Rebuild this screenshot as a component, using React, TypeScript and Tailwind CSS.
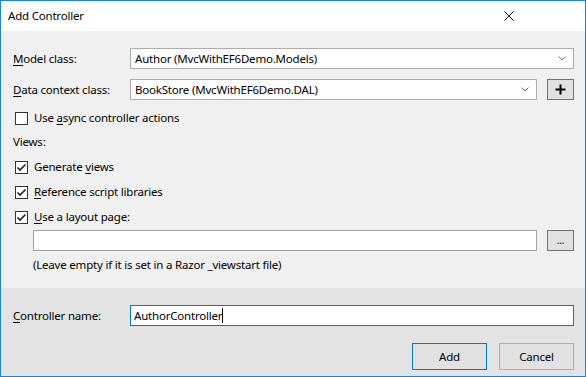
import React from "react";

const font = { fontFamily: '"Noto Sans", "Segoe UI", sans-serif' };

function Chevron() {
  return (
    <svg width="8" height="5" viewBox="0 0 8 5" className="shrink-0">
      <path d="M0.5 0.5 L4 4 L7.5 0.5" fill="none" stroke="#7a7a7a" strokeWidth="1" />
    </svg>
  );
}

function Combo({ value, className = "" }: { value: string; className?: string }) {
  return (
    <div
      className={`flex h-[21px] items-center justify-between border border-[#acacac] bg-white pl-[4px] pr-[7px] ${className}`}
    >
      <span className="whitespace-nowrap">{value}</span>
      <Chevron />
    </div>
  );
}

function Check({ checked }: { checked?: boolean }) {
  return (
    <div className="flex h-[13px] w-[13px] shrink-0 items-center justify-center border border-[#333] bg-white">
      {checked && (
        <svg width="11" height="11" viewBox="0 0 11 11">
          <path d="M1.5 5.5 L4 8 L9.5 2.5" fill="none" stroke="#222" strokeWidth="1.6" />
        </svg>
      )}
    </div>
  );
}

function CheckRow({ checked, children }: { checked?: boolean; children: React.ReactNode }) {
  return (
    <div className="flex h-[16px] items-center gap-[6px] pl-[14px]">
      <Check checked={checked} />
      <span>{children}</span>
    </div>
  );
}

const U = ({ children }: { children: React.ReactNode }) => <span className="underline underline-offset-2">{children}</span>;

export default function App() {
  return (
    <div
      style={font}
      className="flex h-[377px] w-[586px] flex-col border border-[#1883d7] bg-[#f0f0f0] text-[11.5px] tracking-[-0.2px] text-black"
    >
      {/* title bar */}
      <div className="flex h-[30px] shrink-0 items-center justify-between bg-white pl-[7px] pr-[71px]">
        <span>Add Controller</span>
        <svg width="10" height="10" viewBox="0 0 10 10">
          <path d="M0.5 0.5 L9.5 9.5 M9.5 0.5 L0.5 9.5" stroke="#111" strokeWidth="1" />
        </svg>
      </div>

      {/* body */}
      <div className="flex h-[257px] shrink-0 flex-col pr-[11px]">
        <div className="mt-[17px] flex h-[21px] items-center">
          <span className="w-[129px] pl-[12px]">
            <U>M</U>odel class:
          </span>
          <Combo value="Author (MvcWithEF6Demo.Models)" className="flex-1" />
        </div>

        <div className="mt-[10px] flex h-[21px] items-center">
          <span className="w-[129px] pl-[12px]">
            <U>D</U>ata context class:
          </span>
          <Combo value="BookStore (MvcWithEF6Demo.DAL)" className="flex-1" />
          <button className="ml-[10px] flex h-[21px] w-[27px] items-center justify-center border border-[#707070] bg-[#e1e1e1]">
            <svg width="11" height="11" viewBox="0 0 11 11">
              <path d="M5.5 0.5 V10.5 M0.5 5.5 H10.5" stroke="#000" strokeWidth="2" />
            </svg>
          </button>
        </div>

        <div className="mt-[10px]">
          <CheckRow>
            Use <U>a</U>sync controller actions
          </CheckRow>
        </div>

        <div className="mt-[8px] flex h-[16px] items-center pl-[12px]">Views:</div>

        <div className="mt-[9px]">
          <CheckRow checked>
            Generate <U>v</U>iews
          </CheckRow>
        </div>
        <div className="mt-[9px]">
          <CheckRow checked>
            <U>R</U>eference script libraries
          </CheckRow>
        </div>
        <div className="mt-[9px]">
          <CheckRow checked>
            <U>U</U>se a layout page:
          </CheckRow>
        </div>

        <div className="mt-[5px] flex h-[21px] items-center pl-[32px]">
          <div className="h-[21px] flex-1 border border-[#a0a0a0] bg-white" />
          <button className="ml-[10px] flex h-[21px] w-[27px] items-end justify-center border border-[#707070] bg-[#e1e1e1] pb-[5px] text-[10px] leading-none">
            ...
          </button>
        </div>

        <div className="mt-[6px] flex h-[16px] items-center pl-[32px]">
          (Leave empty if it is set in a Razor _viewstart file)
        </div>
      </div>

      {/* footer */}
      <div className="flex flex-1 flex-col bg-[#e3e3e3] pr-[11px]">
        <div className="mt-[17px] flex h-[21px] items-center">
          <span className="w-[129px] pl-[12px]">
            <U>C</U>ontroller name:
          </span>
          <div className="flex h-[21px] flex-1 items-center border border-[#0078d7] bg-white pl-[3px]">
            <span>AuthorController</span>
            <span className="h-[15px] w-px bg-black" />
          </div>
        </div>

        <div className="mt-[17px] flex justify-end gap-[12px]">
          <button className="h-[27px] w-[75px] border border-[#0078d7] bg-[#e1e1e1]">Add</button>
          <button className="h-[27px] w-[75px] border border-[#adadad] bg-[#e1e1e1]">Cancel</button>
        </div>
      </div>
    </div>
  );
}
